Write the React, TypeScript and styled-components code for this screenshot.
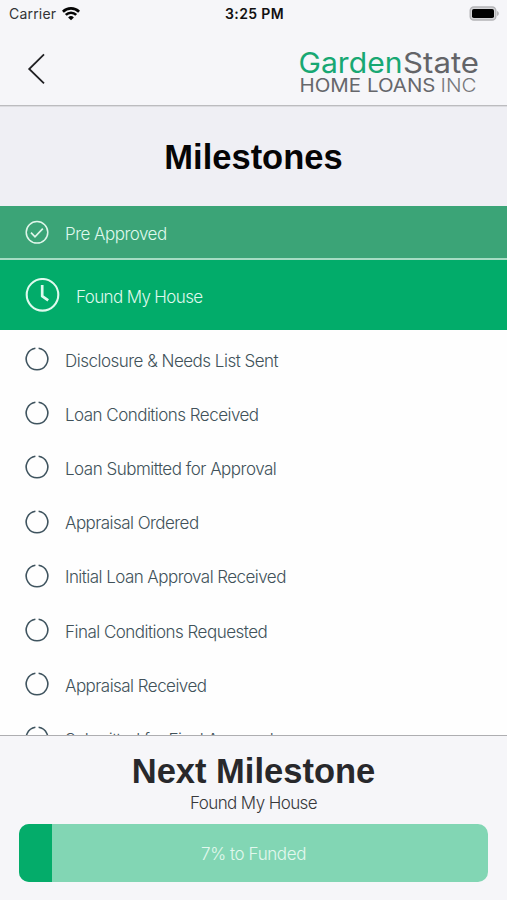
import React from 'react';
import styled, { createGlobalStyle } from 'styled-components';

const GlobalStyle = createGlobalStyle`
  * { box-sizing: border-box; }
  body { margin: 0; background: #f6f6f9; }
`;

const Screen = styled.div`
  display: flex;
  flex-direction: column;
  width: 507px;
  height: 900px;
  overflow: hidden;
  background: #f6f6f9;
  font-family: Inter, 'Liberation Sans', sans-serif;
  color: #1c1c1e;
`;

const StatusBar = styled.div`
  display: grid;
  grid-template-columns: 1fr auto 1fr;
  align-items: center;
  height: 27px;
  flex: none;
  padding: 0 7px 0 9px;
  font-size: 14px;
  line-height: 27px;
`;

const Carrier = styled.div`
  display: flex;
  align-items: center;
  gap: 6px;
  color: #333336;
  letter-spacing: 0.2px;
`;

const Clock = styled.div`
  font-weight: 600;
  color: #111;
  letter-spacing: 0.35px;
`;

const Battery = styled.svg`
  display: block;
  justify-self: end;
  margin-top: -1px;
`;

const NavBar = styled.header`
  display: flex;
  justify-content: space-between;
  align-items: flex-start;
  flex: none;
  height: 79px;
  padding: 20px 27px 0 27px;
  border-bottom: 1px solid #bcbcbf;
`;

const BackIcon = styled.svg`
  display: block;
  margin-top: 6px;
`;

const Logo = styled.svg`
  display: block;
  overflow: visible;
  font-family: Inter, sans-serif;
`;

const TitleBar = styled.div`
  display: flex;
  justify-content: center;
  flex: none;
  height: 100px;
  padding-top: 29px;
  background: #efeff4;
  border-top: 1px solid #dcdce0;
`;

const Heading = styled.h1`
  margin: 0;
  font-family: 'Liberation Sans', Arial, sans-serif;
  font-size: 34.5px;
  line-height: 42px;
  font-weight: 700;
  white-space: nowrap;
`;

const PageHeading = styled(Heading)`
  color: #050506;
`;

const List = styled.ul`
  flex: 1;
  min-height: 0;
  overflow: hidden;
  margin: 0;
  padding: 0;
  list-style: none;
  background: #fefefe;
`;

type Status = 'done' | 'current' | 'pending';

const rowHeight = { done: '54px', current: '70px', pending: '54.2px' };
const rowColor = { done: '#3ba477', current: '#02ac6a', pending: '#fefefe' };

const Row = styled.li<{ $status: Status }>`
  display: flex;
  align-items: center;
  height: ${(p) => rowHeight[p.$status]};
  padding-left: 25px;
  gap: 16px;
  background: ${(p) => rowColor[p.$status]};
  color: ${(p) => (p.$status === 'pending' ? '#41525a' : '#dff8ec')};
  border-bottom: ${(p) => (p.$status === 'done' ? '2px solid #a5dcc3' : '0')};
  margin-bottom: ${(p) => (p.$status === 'current' ? '2px' : '0')};
`;

const Label = styled.span<{ $spacing: number }>`
  padding-top: 3px;
  font-size: 17px;
  line-height: 22px;
  font-weight: 300;
  letter-spacing: ${(p) => p.$spacing}px;
  white-space: nowrap;
`;

const RowIcon = styled.svg`
  display: block;
  flex: none;
`;

const Footer = styled.footer`
  display: flex;
  flex-direction: column;
  align-items: center;
  flex: none;
  height: 165px;
  padding: 14px 19px 0;
  border-top: 1px solid #aeaeb1;
`;

const FooterHeading = styled(Heading)`
  color: #28282b;
`;

const NextName = styled.div`
  height: 32px;
  padding-top: 1px;
  font-size: 17px;
  line-height: 20px;
  font-weight: 300;
  letter-spacing: -0.6px;
  color: #38383b;
`;

const Track = styled.div`
  display: grid;
  width: 469px;
  height: 58px;
  border-radius: 10px;
  overflow: hidden;
  background: #82d6b4;
`;

const Fill = styled.div`
  grid-area: 1 / 1;
  background: #04ac6a;
`;

const TrackLabel = styled.div`
  grid-area: 1 / 1;
  align-self: center;
  text-align: center;
  padding-top: 2px;
  font-size: 17px;
  font-weight: 300;
  letter-spacing: -0.4px;
  color: #e2f8ee;
  z-index: 1;
`;

function StatusIcon({ status }: { status: Status }) {
  if (status === 'current') {
    return (
      <RowIcon width="35" height="35" viewBox="0 0 35 35" fill="none" stroke="#dffaee" strokeWidth="2.1">
        <circle cx="17.5" cy="16.8" r="15.8" />
        <path d="M17.2 7v11.200l6 4.200" strokeWidth="2.700" strokeLinejoin="round" />
      </RowIcon>
    );
  }
  if (status === 'done') {
    return (
      <RowIcon width="24" height="24" viewBox="0 0 24 24" fill="none" stroke="#dff6ea" strokeWidth="1.5">
        <circle cx="12" cy="12.3" r="10.8" />
        <path d="M6 12.600l4 4.200 7.800-8.200" strokeWidth="1.7" />
      </RowIcon>
    );
  }
  return (
    <RowIcon width="24" height="24" viewBox="0 0 24 24" fill="none" stroke="#3f545f" strokeWidth="1.6">
      <path d="M13.6 1.3a10.800 10.800 0 1 1-3.200 0" />
    </RowIcon>
  );
}

const milestones: { name: string; status: Status; spacing: number }[] = [
  { name: 'Pre Approved', status: 'done', spacing: -0.52 },
  { name: 'Found My House', status: 'current', spacing: -0.63 },
  { name: 'Disclosure & Needs List Sent', status: 'pending', spacing: -0.51 },
  { name: 'Loan Conditions Received', status: 'pending', spacing: -0.53 },
  { name: 'Loan Submitted for Approval', status: 'pending', spacing: -0.5 },
  { name: 'Appraisal Ordered', status: 'pending', spacing: -0.55 },
  { name: 'Initial Loan Approval Received', status: 'pending', spacing: -0.55 },
  { name: 'Final Conditions Requested', status: 'pending', spacing: -0.52 },
  { name: 'Appraisal Received', status: 'pending', spacing: -0.54 },
  { name: 'Submitted for Final Approval', status: 'pending', spacing: -0.52 },
];

export default function App() {
  const progress = 7;
  return (
    <>
      <GlobalStyle />
      <Screen>
        <StatusBar>
          <Carrier>
            Carrier
            <svg width="18" height="14" viewBox="0 0 18 14" fill="none" stroke="#050505" strokeWidth="2.7">
              <path d="M.9 4.700a11.500 11.500 0 0 1 16.200 0" />
              <path d="M3.800 7.900a7.400 7.400 0 0 1 10.400 0" />
              <path d="M9 13.300L6.100 10.400a4.200 4.200 0 0 1 5.800 0z" fill="#050505" stroke="none" />
            </svg>
          </Carrier>
          <Clock>3:25 PM</Clock>
          <Battery width="31" height="15" viewBox="0 0 31 15">
            <rect x="1.2" y="1" width="25.600" height="13" rx="3.6" fill="#d5d5d8" stroke="#b4b4b7" strokeWidth="1.4" />
            <rect x="3" y="3" width="22" height="9" rx="1.8" fill="#020202" />
            <path d="M28.2 5c2 .7 2 4.300 0 5z" fill="#a9a9ac" />
          </Battery>
        </StatusBar>
        <NavBar>
          <BackIcon width="20" height="32" viewBox="0 0 20 32" fill="none" stroke="#202023" strokeWidth="1.8">
            <path d="M17 1.300L2.200 16 17 30.300" />
          </BackIcon>
          <Logo width="182" height="48" viewBox="0 0 182 48">
            <text x="0.5" y="25.500" fontSize="28.500" fill="#18a873" textLength="104" lengthAdjust="spacingAndGlyphs">Garden</text>
            <text x="105" y="25.500" fontSize="28.500" fill="#636468" textLength="76" lengthAdjust="spacingAndGlyphs">State</text>
            <text x="1.500" y="44.500" fontSize="18" fill="#66676b" textLength="136" lengthAdjust="spacingAndGlyphs">HOME LOANS</text>
            <text x="142.500" y="44.500" fontSize="18" fontWeight="300" fill="#77787c" textLength="36" lengthAdjust="spacingAndGlyphs">INC</text>
          </Logo>
        </NavBar>
        <TitleBar>
          <PageHeading>Milestones</PageHeading>
        </TitleBar>
        <List>
          {milestones.map((m) => (
            <Row key={m.name} $status={m.status}>
              <StatusIcon status={m.status} />
              <Label $spacing={m.spacing}>{m.name}</Label>
            </Row>
          ))}
        </List>
        <Footer>
          <FooterHeading as="h2">Next Milestone</FooterHeading>
          <NextName>Found My House</NextName>
          <Track>
            <Fill style={{ width: `${progress}%` }} />
            <TrackLabel>{progress}% to Funded</TrackLabel>
          </Track>
        </Footer>
      </Screen>
    </>
  );
}
